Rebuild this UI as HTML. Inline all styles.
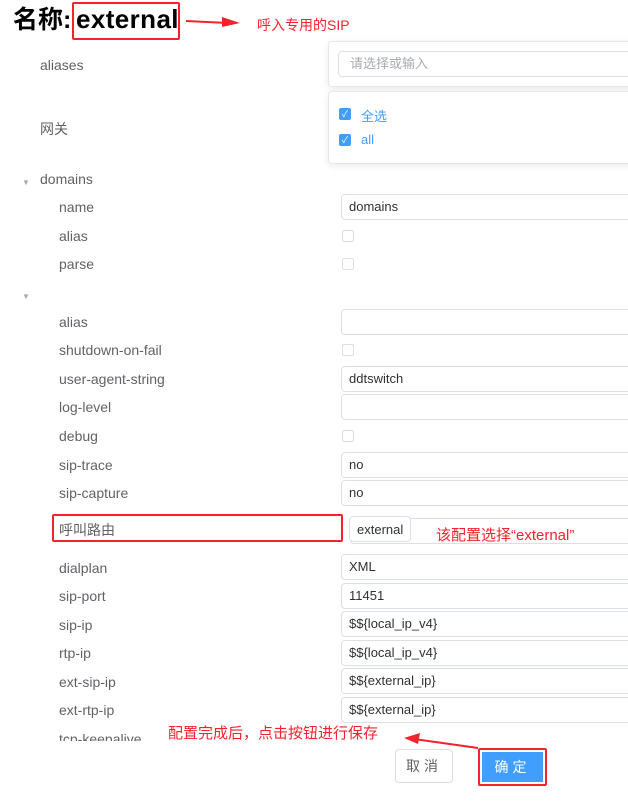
<!DOCTYPE html>
<html><head><meta charset="utf-8"><style>
*{margin:0;padding:0;box-sizing:border-box}
body{width:628px;height:804px;background:#fff;position:relative;overflow:hidden;font-family:"Liberation Sans","Noto Sans CJK SC",sans-serif;color:#606266;font-size:14px}
.a{position:absolute;white-space:nowrap}
.l{position:absolute;left:59px;font-size:14px;color:#606266;line-height:16px}
.in{position:absolute;left:341px;width:300px;height:26px;border:1px solid #dcdfe6;border-radius:4px;font-size:13px;color:#303133;padding-left:7px;line-height:24px}
.cb{position:absolute;left:342px;width:12px;height:12px;border:1px solid #dcdfe6;border-radius:2px}
.red{color:#f5222d}
</style></head><body>
<div class="a" style="left:13px;top:4px;font-size:25px;font-weight:bold;color:#000;line-height:32px">名称:</div>
<div class="a" style="left:76px;top:3px;font-size:26px;font-weight:bold;color:#000;line-height:32px;letter-spacing:0.4px">external</div>
<div class="a" style="left:72px;top:2px;width:108px;height:38px;border:2px solid #f5222d;border-radius:2px"></div>
<svg class="a" style="left:184px;top:14px" width="60" height="16"><path d="M2 7 L44 9" stroke="#f5222d" stroke-width="2"/><path d="M38 3 L56 9 L38 13 Z" fill="#f5222d"/></svg>
<div class="a red" style="left:257px;top:15px;font-size:14px">呼入专用的SIP</div>

<div class="l" style="top:121px;left:40px">网关</div>
<div class="l" style="left:40px;top:57px">aliases</div>
<div class="a" style="left:328px;top:41px;width:310px;height:46px;border:1px solid #e4e7ed;border-radius:4px;box-shadow:0 2px 8px rgba(0,0,0,.08);background:#fff"></div>
<div class="a" style="left:338px;top:51px;width:300px;height:26px;border:1px solid #dcdfe6;border-radius:4px;color:#a8abb2;font-size:13px;padding-left:11px;line-height:24px">请选择或输入</div>
<div class="a" style="left:328px;top:91px;width:310px;height:73px;border:1px solid #e4e7ed;border-radius:4px;box-shadow:0 2px 8px rgba(0,0,0,.08);background:#fff"></div>
<div class="a" style="left:339px;top:108px;width:12px;height:12px;background:#409eff;border-radius:2px;color:#fff;font-size:9px;line-height:12px;text-align:center">✓</div>
<div class="a" style="left:361px;top:106px;color:#409eff;font-size:13px">全选</div>
<div class="a" style="left:339px;top:134px;width:12px;height:12px;background:#409eff;border-radius:2px;color:#fff;font-size:9px;line-height:12px;text-align:center">✓</div>
<div class="a" style="left:361px;top:132px;color:#409eff;font-size:13px">all</div>

<div class="a" style="left:22px;top:178px;font-size:8px;color:#a8abb2">▼</div>
<div class="l" style="left:40px;top:171px">domains</div>
<div class="l" style="top:199px">name</div><div class="in" style="top:194px">domains</div>
<div class="l" style="top:228px">alias</div><div class="cb" style="top:230px"></div>
<div class="l" style="top:256px">parse</div><div class="cb" style="top:258px"></div>
<div class="a" style="left:22px;top:292px;font-size:8px;color:#a8abb2">▼</div>
<div class="l" style="top:314px">alias</div><div class="in" style="top:309px"></div>
<div class="l" style="top:342px">shutdown-on-fail</div><div class="cb" style="top:344px"></div>
<div class="l" style="top:371px">user-agent-string</div><div class="in" style="top:366px">ddtswitch</div>
<div class="l" style="top:399px">log-level</div><div class="in" style="top:394px"></div>
<div class="l" style="top:428px">debug</div><div class="cb" style="top:430px"></div>
<div class="l" style="top:457px">sip-trace</div><div class="in" style="top:452px">no</div>
<div class="l" style="top:485px">sip-capture</div><div class="in" style="top:480px">no</div>
<div class="in" style="top:518px;left:350px;border-right:none"></div>
<div class="a" style="left:349px;top:516px;width:62px;height:26px;border:1px solid #dcdfe6;border-radius:4px;background:#fff;font-size:13px;color:#303133;padding-left:7px;line-height:26px">external</div>
<div class="a" style="left:52px;top:514px;width:291px;height:28px;border:2px solid #f5222d;border-radius:2px"></div>
<div class="l" style="top:522px">呼叫路由</div>
<div class="a red" style="left:436px;top:524px;font-size:15px">该配置选择“external”</div>
<div class="l" style="top:560px">dialplan</div><div class="in" style="top:554px">XML</div>
<div class="l" style="top:588px">sip-port</div><div class="in" style="top:583px">11451</div>
<div class="l" style="top:617px">sip-ip</div><div class="in" style="top:611px">$${local_ip_v4}</div>
<div class="l" style="top:645px">rtp-ip</div><div class="in" style="top:640px">$${local_ip_v4}</div>
<div class="l" style="top:674px">ext-sip-ip</div><div class="in" style="top:668px">$${external_ip}</div>
<div class="l" style="top:702px">ext-rtp-ip</div><div class="in" style="top:697px">$${external_ip}</div>
<div class="a" style="left:0;top:728px;width:160px;height:13px;overflow:hidden"><div class="l" style="top:3px">tcp-keepalive</div></div>
<div class="a red" style="left:168px;top:722px;font-size:15px">配置完成后，点击按钮进行保存</div>
<svg class="a" style="left:400px;top:728px" width="80" height="22"><path d="M78 20 L14 11" stroke="#f5222d" stroke-width="2"/><path d="M4 10 L20 5 L18 16 Z" fill="#f5222d"/></svg>
<div class="a" style="left:395px;top:749px;width:58px;height:34px;border:1px solid #dcdfe6;border-radius:4px;text-align:center;line-height:32px;color:#606266;font-size:14px;letter-spacing:4px">取消</div>
<div class="a" style="left:478px;top:748px;width:69px;height:38px;border:2px solid #f5222d;border-radius:2px;padding:2px"><div style="background:#409eff;color:#fff;height:100%;text-align:center;line-height:30px;font-size:14px;letter-spacing:4px">确定</div></div>
</body></html>
